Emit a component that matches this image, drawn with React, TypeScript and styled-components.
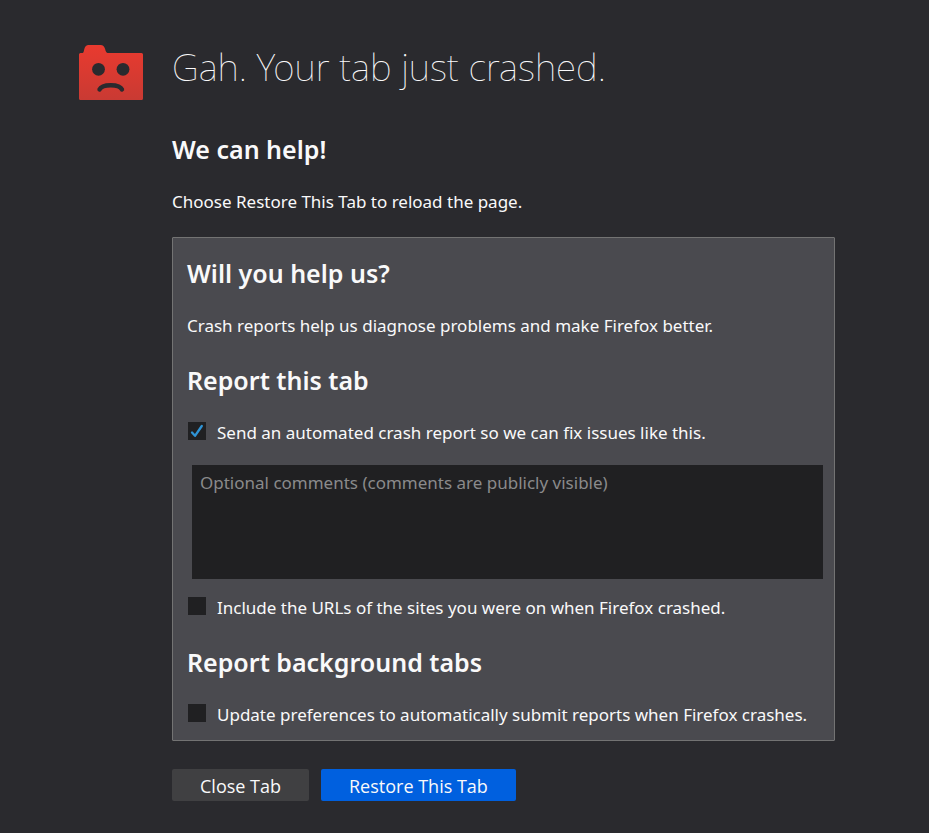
import React from "react";
import styled, { createGlobalStyle } from "styled-components";

const GlobalStyle = createGlobalStyle`
  * { box-sizing: border-box; }
  body {
    margin: 0;
    background: #2a2a2e;
    color: #f9f9fa;
    font: 17px/28px "Noto Sans", "Open Sans", sans-serif;
  }
`;

const Page = styled.main`
  display: grid;
  grid-template-columns: 64px minmax(0, 1fr);
  column-gap: 29px;
  padding: 45px 94px 32px 79px;
`;

const CrashIcon = styled.svg`
  display: block;
  width: 64px;
  height: 55px;
`;

const Content = styled.div`
  display: flex;
  flex-direction: column;
`;

const Title = styled.h1`
  margin: 0 0 40px;
  font-size: 37px;
  font-weight: 100;
  line-height: 44px;
`;

const Heading = styled.h2`
  margin: 0 0 19px;
  font-size: 25px;
  font-weight: 600;
  line-height: 40px;

  p + &, label + & { margin-top: 20px; }
`;

const Text = styled.p`
  margin: 0;
`;

const Panel = styled.form`
  display: flex;
  flex-direction: column;
  margin: 21px 0 28px;
  padding: 15px 11px 11px 14px;
  background: #4a4a4f;
  border: 1px solid #737373;
  border-radius: 1px;
`;

const Option = styled.label`
  display: flex;
  align-items: flex-start;
  gap: 11px;
  padding-left: 1px;
`;

const CheckBox = styled.span`
  display: grid;
  flex: none;
  width: 18px;
  height: 18px;
  margin-top: 3px;

  > * { grid-area: 1 / 1; }
`;

const CheckInput = styled.input`
  appearance: none;
  width: 18px;
  height: 18px;
  margin: 0;
  background: #202022;

  &:not(:checked) + svg { visibility: hidden; }
`;

const CheckMark = styled.svg`
  width: 18px;
  height: 18px;
  pointer-events: none;
`;

const Comments = styled.textarea`
  height: 114px;
  margin: 18px 0 15px 5px;
  padding: 4px 8px;
  border: 0;
  resize: none;
  background: #202022;
  color: inherit;
  font: inherit;
  &::placeholder { color: #8a8a8b; opacity: 1; }
`;

const Actions = styled.div`
  display: flex;
  flex-wrap: wrap;
  gap: 12px;
`;

const Button = styled.button<{ $primary?: boolean }>`
  height: 32px;
  padding: 2px 28px 0;
  border: 0;
  border-radius: 2px;
  background: ${(p) => (p.$primary ? "#0060df" : "#404042")};
  color: inherit;
  font: 18px/28px "Open Sans", "Noto Sans", sans-serif;
`;

function CheckOption({ children, checked }: { children: React.ReactNode; checked?: boolean }) {
  return (
    <Option>
      <CheckBox>
        <CheckInput type="checkbox" defaultChecked={checked} />
        <CheckMark viewBox="0 0 18 18" aria-hidden="true">
          <path d="M4 10.500 7 13.800 13.800 4" fill="none" stroke="#2f94d6" strokeWidth="2.300" strokeLinecap="round" strokeLinejoin="round" />
        </CheckMark>
      </CheckBox>
      <span>{children}</span>
    </Option>
  );
}

export default function App() {
  return (
    <Page>
      <GlobalStyle />
      <CrashIcon viewBox="0 0 64 55" aria-hidden="true">
        <defs>
          <linearGradient id="folder" x1="0" y1="0" x2="0" y2="1">
            <stop offset="0" stopColor="#e93a2f" />
            <stop offset="1" stopColor="#c93a33" />
          </linearGradient>
        </defs>
        <path
          fill="url(#folder)"
          d="M1.500 8H3C5 8 4.800 5.500 5.400 3.700 6.200 1.200 7.500 0 9.500 0H21.500C24 0 25.300 1.500 26 3.700 26.700 6 27 8 29.500 8H62.500Q64 8 64 9.500V53.500Q64 55 62.500 55H1.500Q0 55 0 53.500V9.500Q0 8 1.500 8Z"
        />
        <g fill="#2a2a2e">
          <circle cx="19.500" cy="24.300" r="6.400" />
          <circle cx="44" cy="24.300" r="6.400" />
        </g>
        <path d="M20.500 44.500C23 38.800 40.500 38.800 43 44.500" fill="none" stroke="#2a2a2e" strokeWidth="4.400" strokeLinecap="round" />
      </CrashIcon>
      <Content>
        <Title>Gah. Your tab just crashed.</Title>
        <Heading>We can help!</Heading>
        <Text>Choose Restore This Tab to reload the page.</Text>
        <Panel>
          <Heading>Will you help us?</Heading>
          <Text>Crash reports help us diagnose problems and make Firefox better.</Text>
          <Heading>Report this tab</Heading>
          <CheckOption checked>Send an automated crash report so we can fix issues like this.</CheckOption>
          <Comments aria-label="Comments" placeholder="Optional comments (comments are publicly visible)" />
          <CheckOption>Include the URLs of the sites you were on when Firefox crashed.</CheckOption>
          <Heading>Report background tabs</Heading>
          <CheckOption>Update preferences to automatically submit reports when Firefox crashes.</CheckOption>
        </Panel>
        <Actions>
          <Button type="button">Close Tab</Button>
          <Button type="button" $primary>Restore This Tab</Button>
        </Actions>
      </Content>
    </Page>
  );
}
